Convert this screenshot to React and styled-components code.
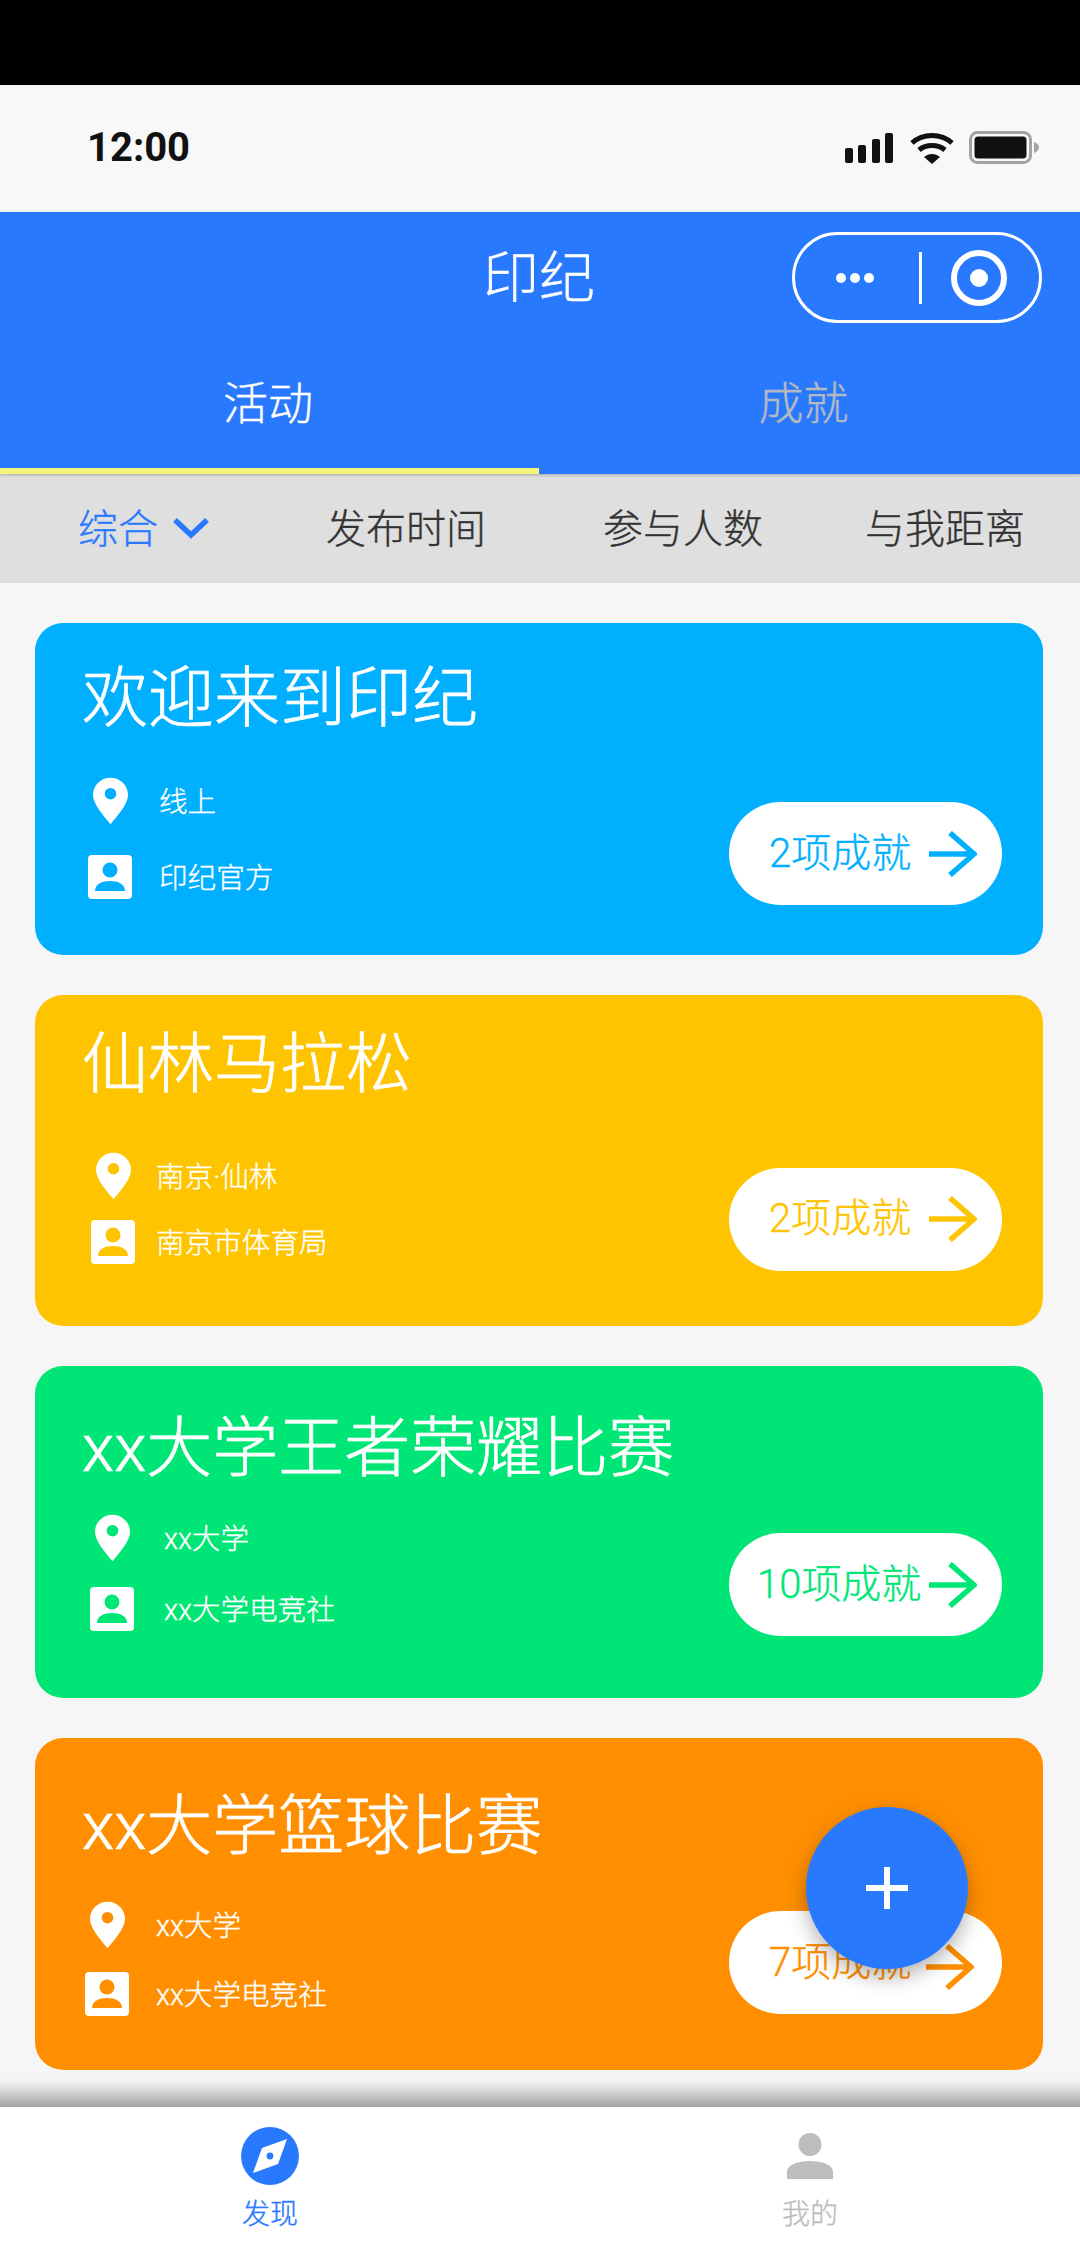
import React from 'react'
import styled, { createGlobalStyle } from 'styled-components'

const BLUE = '#2979ff'

const GlobalStyle = createGlobalStyle`
  html, body {
    margin: 0;
    padding: 0;
    background: #f6f6f6;
  }
  * {
    box-sizing: border-box;
  }
`

const Page = styled.div`
  position: relative;
  width: 1080px;
  height: 2244px;
  display: flex;
  flex-direction: column;
  overflow: hidden;
  background: #f6f6f6;
  font-family: Roboto, "Noto Sans CJK SC", sans-serif;
  font-weight: 300;
  -webkit-text-stroke: 0.35px currentColor;
`

const Notch = styled.div`
  height: 85px;
  background: #000;
`

const StatusBar = styled.div`
  height: 127px;
  background: #f8f8f8;
  display: flex;
  align-items: center;
  justify-content: space-between;
  padding: 0 41px 2px 87px;
`

const Time = styled.span`
  font-family: Roboto, "Liberation Sans", sans-serif;
  font-size: 40px;
  font-weight: 700;
  color: #111;
  -webkit-text-stroke: 0;
`

const StatusIcons = styled.div`
  display: flex;
  align-items: center;
  gap: 15px;
`

const Header = styled.header`
  position: relative;
  background: ${BLUE};
  height: 262px;
  display: flex;
  flex-direction: column;
  box-shadow: 0 1px 3px rgba(0, 0, 0, 0.25);
`

const TitleBar = styled.div`
  position: relative;
  height: 132px;
  display: flex;
  justify-content: center;
  padding-top: 21px;
  padding-right: 2px;
`

const AppTitle = styled.h1`
  margin: 0;
  font-size: 56px;
  font-weight: 300;
  line-height: 90px;
  color: #fff;
`

const Capsule = styled.div`
  position: absolute;
  right: 38px;
  top: 20px;
  width: 250px;
  height: 91px;
  border: 3px solid #fff;
  border-radius: 46px;
  display: flex;
  align-items: center;
  padding-left: 41px;
`

const Dots = styled.div`
  display: flex;
  gap: 4px;
`

const Dot = styled.i`
  display: block;
  width: 10px;
  height: 10px;
  border-radius: 50%;
  background: #fff;
`

const CapsuleDivider = styled.div`
  width: 3px;
  height: 52px;
  background: #fff;
  margin-left: 45px;
`

const Target = styled.div`
  width: 56px;
  height: 56px;
  margin-left: 29px;
  border: 6px solid #fff;
  border-radius: 50%;
  display: flex;
  align-items: center;
  justify-content: center;

  &::after {
    content: "";
    width: 18px;
    height: 18px;
    border-radius: 50%;
    background: #fff;
  }
`

const Tabs = styled.div`
  flex: 1;
  display: flex;
`

const Tab = styled.div`
  flex: 0 0 ${p => p.$width}px;
  height: 130px;
  padding-top: 28px;
  padding-right: ${p => p.$shift}px;
  text-align: center;
  font-size: 45px;
  line-height: 66px;
  color: ${p => (p.$active ? '#fff' : '#b4b8bf')};
  border-bottom: 6px solid ${p => (p.$active ? '#f4f57a' : 'transparent')};
`

const SortBar = styled.nav`
  height: 109px;
  background: #dfdfdf;
  display: grid;
  grid-template-columns: 248px 277px 262px 1fr;
  align-items: center;
  padding-left: 78px;
  padding-bottom: 6px;
`

const SortItem = styled.div`
  display: flex;
  align-items: center;
  gap: 15px;
  font-size: 40px;
  color: ${p => (p.$active ? BLUE : '#333')};
`

const List = styled.main`
  flex: 1;
  min-height: 0;
  display: flex;
  flex-direction: column;
  gap: 40.2px;
  padding: 40px 37px 0 35px;
`

const Card = styled.article`
  flex: none;
  height: 331.5px;
  border-radius: 28px;
  background: ${p => p.$color};
  color: #fff;
  display: flex;
  justify-content: space-between;
  padding: 0 41px 0 48px;
`

const CardBody = styled.div`
  display: flex;
  flex-direction: column;
`

const CardTitle = styled.h2`
  margin: ${p => p.$top}px 0 0 -1px;
  font-size: 66px;
  font-weight: 300;
  line-height: 80px;
  white-space: nowrap;
  -webkit-text-stroke: 0.7px currentColor;
`

const InfoList = styled.div`
  display: flex;
  flex-direction: column;
  margin-top: ${p => p.$top}px;
  margin-left: ${p => p.$indent}px;
  gap: ${p => p.$gap}px;
`

const InfoRow = styled.div`
  height: 48px;
  display: flex;
  align-items: center;
  gap: ${p => p.$gap}px;
  font-size: 28.6px;
`

const InfoText = styled.span`
  margin-bottom: 3px;
`

const IconCell = styled.div`
  width: 44px;
  display: flex;
  justify-content: center;
`

const Action = styled.div`
  width: 273px;
  height: 103px;
  margin-top: ${p => p.$top}px;
  border-radius: 52px;
  background: #fff;
  color: ${p => p.$color};
  display: flex;
  align-items: center;
  justify-content: space-between;
  padding: 0 ${p => p.$right}px 0 ${p => p.$left}px;
  font-size: 40px;
  white-space: nowrap;
`

const ActionLabel = styled.span`
  margin-bottom: 8px;
`

const Fab = styled.div`
  position: absolute;
  left: 806px;
  top: 1807px;
  width: 162px;
  height: 162px;
  border-radius: 50%;
  background: ${BLUE};
  box-shadow: 0 8px 20px rgba(0, 0, 0, 0.3);
  display: flex;
  align-items: center;
  justify-content: center;
`

const TabBar = styled.footer`
  position: relative;
  height: 137px;
  background: #fff;
  display: flex;

  &::before {
    content: "";
    position: absolute;
    left: 0;
    right: 0;
    top: -38px;
    height: 38px;
    background: linear-gradient(rgba(0, 0, 0, 0), rgba(0, 0, 0, 0.02) 35%, rgba(0, 0, 0, 0.34));
  }
`

const TabItem = styled.div`
  flex: 1;
  display: flex;
  flex-direction: column;
  align-items: center;
  padding-top: 20px;
  font-size: 28px;
  line-height: 44px;
  color: ${p => (p.$active ? BLUE : '#bdbdbd')};
`

const TabIcon = styled.div`
  height: 58px;
  margin-bottom: 8px;
  display: flex;
  align-items: center;
`

const SignalIcon = styled.svg`
  margin-right: 2px;
`

const ChevronIcon = styled.svg`
  margin-top: 5px;
`

const ArrowIcon = styled.svg`
  flex: none;
  margin-top: ${p => p.$drop}px;
`

const Signal = () => (
  <SignalIcon width="48" height="30" viewBox="0 0 48 30">
    <rect x="0" y="15" width="8" height="15" rx="2" fill="#111" />
    <rect x="13" y="12" width="8" height="18" rx="2" fill="#111" />
    <rect x="27" y="6" width="8" height="24" rx="2" fill="#111" />
    <rect x="40" y="0" width="8" height="30" rx="2" fill="#111" />
  </SignalIcon>
)

const Wifi = () => (
  <svg width="44" height="32" viewBox="0 0 44 32" fill="none" stroke="#111" strokeWidth="5">
    <path d="M2 11 C13 1 31 1 42 11" />
    <path d="M9 18 C16 12 28 12 35 18" />
    <path d="M14 25 L22 32 L30 25 C25 21 19 21 14 25 Z" fill="#111" stroke="none" />
  </svg>
)

const Battery = () => (
  <svg width="70" height="33" viewBox="0 0 70 33">
    <rect x="1.5" y="1.5" width="60" height="30" rx="7" fill="none" stroke="#a3a3a3" strokeWidth="3" />
    <rect x="5.5" y="5.5" width="52" height="22" rx="3.5" fill="#111" />
    <path d="M65 11 C68 12 70 14 70 16.5 C70 19 68 21 65 22 Z" fill="#a3a3a3" />
  </svg>
)

const Chevron = () => (
  <ChevronIcon width="36" height="22" viewBox="0 0 36 22" fill="none" stroke={BLUE} strokeWidth="5.5">
    <path d="M2 3 L18 18 L34 3" />
  </ChevronIcon>
)

const Pin = () => (
  <svg width="35" height="48" viewBox="0 0 36 48">
    <path
      fill="#fff"
      fillRule="evenodd"
      d="M18 0 C8 0 0 8 0 17.5 C0 28 12 40 18 48 C24 40 36 28 36 17.5 C36 8 28 0 18 0 Z M18 10.5 A6 6 0 1 1 18 22.5 A6 6 0 1 1 18 10.5 Z"
    />
  </svg>
)

const PersonCard = ({ color }) => (
  <svg width="44" height="44" viewBox="0 0 44 44">
    <rect width="44" height="44" rx="4" fill="#fff" />
    <circle cx="22" cy="15" r="7.5" fill={color} />
    <path d="M7 36 C7 29 14 26 22 26 C30 26 37 29 37 36 Z" fill={color} />
  </svg>
)

const Arrow = ({ color, drop }) => (
  <ArrowIcon width="48" height="46" viewBox="0 0 48 46" fill="none" stroke={color} strokeWidth="5.5" $drop={drop}>
    <path d="M0 23 H45" />
    <path d="M21 2 L45 23 L21 44" />
  </ArrowIcon>
)

const Plus = () => (
  <svg width="42" height="42" viewBox="0 0 42 42" fill="#fff">
    <rect x="18" y="0" width="6" height="42" />
    <rect x="0" y="18" width="42" height="6" />
  </svg>
)

const Compass = () => (
  <svg width="58" height="58" viewBox="0 0 58 58">
    <circle cx="29" cy="29" r="29" fill={BLUE} />
    <path d="M46 12 L37 37 L12 46 L21 21 Z" fill="#fff" />
    <circle cx="29" cy="29" r="3.4" fill={BLUE} />
  </svg>
)

const Person = () => (
  <svg width="46" height="46" viewBox="0 0 46 46" fill="#bdbdbd">
    <ellipse cx="23" cy="11.5" rx="11.5" ry="11.5" />
    <path d="M0 46 V39 C0 32 10 28 23 28 C36 28 46 32 46 39 V46 Z" />
  </svg>
)

const cards = [
  {
    color: '#00b0ff', title: '欢迎来到印纪', place: '线上', owner: '印纪官方', count: '2项成就',
    titleTop: 36, infoTop: 38, indent: 5, rowGap: 28, textGap: 27, actionTop: 179, left: 40, right: 25, drop: 0,
  },
  {
    color: '#ffc400', title: '仙林马拉松', place: '南京·仙林', owner: '南京市体育局', count: '2项成就',
    titleTop: 30, infoTop: 47, indent: 8, rowGap: 18, textGap: 21, actionTop: 173, left: 40, right: 25, drop: 0,
  },
  {
    color: '#00e676', title: 'xx大学王者荣耀比赛', place: 'xx大学', owner: 'xx大学电竞社', count: '10项成就',
    titleTop: 43, infoTop: 25, indent: 7, rowGap: 23, textGap: 30, actionTop: 167, left: 28, right: 25, drop: 0,
  },
  {
    color: '#ff8f00', title: 'xx大学篮球比赛', place: 'xx大学', owner: 'xx大学电竞社', count: '7项成就',
    titleTop: 49, infoTop: 34, indent: 2, rowGap: 21, textGap: 27, actionTop: 173, left: 40, right: 28, drop: 8,
  },
]

const App = () => {
  return (
    <Page>
      <GlobalStyle />
      <Notch />
      <StatusBar>
        <Time>12:00</Time>
        <StatusIcons>
          <Signal />
          <Wifi />
          <Battery />
        </StatusIcons>
      </StatusBar>
      <Header>
        <TitleBar>
          <AppTitle>印纪</AppTitle>
          <Capsule>
            <Dots>
              <Dot />
              <Dot />
              <Dot />
            </Dots>
            <CapsuleDivider />
            <Target />
          </Capsule>
        </TitleBar>
        <Tabs>
          <Tab $active $width={539} $shift={3}>活动</Tab>
          <Tab $width={541} $shift={12}>成就</Tab>
        </Tabs>
      </Header>
      <SortBar>
        <SortItem $active>
          综合
          <Chevron />
        </SortItem>
        <SortItem>发布时间</SortItem>
        <SortItem>参与人数</SortItem>
        <SortItem>与我距离</SortItem>
      </SortBar>
      <List>
        {cards.map(c => (
          <Card key={c.title} $color={c.color}>
            <CardBody>
              <CardTitle $top={c.titleTop}>{c.title}</CardTitle>
              <InfoList $top={c.infoTop} $indent={c.indent} $gap={c.rowGap}>
                <InfoRow $gap={c.textGap}>
                  <IconCell>
                    <Pin />
                  </IconCell>
                  <InfoText>{c.place}</InfoText>
                </InfoRow>
                <InfoRow $gap={c.textGap}>
                  <IconCell>
                    <PersonCard color={c.color} />
                  </IconCell>
                  <InfoText>{c.owner}</InfoText>
                </InfoRow>
              </InfoList>
            </CardBody>
            <Action $top={c.actionTop} $color={c.color} $left={c.left} $right={c.right}>
              <ActionLabel>{c.count}</ActionLabel>
              <Arrow color={c.color} drop={c.drop} />
            </Action>
          </Card>
        ))}
      </List>
      <TabBar>
        <TabItem $active>
          <TabIcon>
            <Compass />
          </TabIcon>
          发现
        </TabItem>
        <TabItem>
          <TabIcon>
            <Person />
          </TabIcon>
          我的
        </TabItem>
      </TabBar>
      <Fab>
        <Plus />
      </Fab>
    </Page>
  )
}

export default App
